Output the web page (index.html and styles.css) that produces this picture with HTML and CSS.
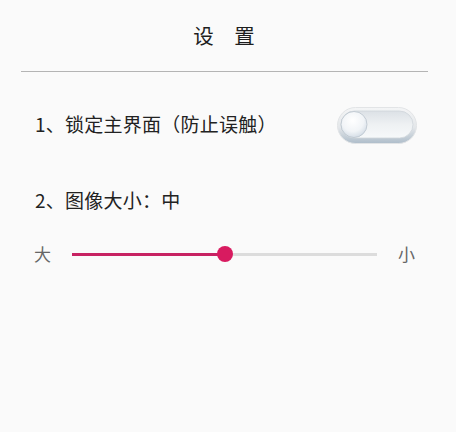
FILE: index.html
```html
<!DOCTYPE html>
<html lang="zh-CN">
<head>
<meta charset="utf-8">
<title>设置</title>
<link rel="stylesheet" href="styles.css">
</head>
<body>
<div class="page">
  <header class="title-bar">
    <h1 class="title">设　置</h1>
  </header>
  <div class="divider"></div>
  <div class="row row-lock">
    <span class="label">1、锁定主界面（防止误触）</span>
    <svg class="toggle" width="80" height="37" viewBox="0 0 80 37">
      <defs>
        <linearGradient id="outer" x1="0" y1="0" x2="0" y2="1">
          <stop offset="0" stop-color="#f4f5f6"/>
          <stop offset="0.55" stop-color="#e4e7ea"/>
          <stop offset="1" stop-color="#aebdca"/>
        </linearGradient>
        <linearGradient id="inner" x1="0" y1="0" x2="0" y2="1">
          <stop offset="0" stop-color="#dce1e6"/>
          <stop offset="0.5" stop-color="#eef1f3"/>
          <stop offset="1" stop-color="#f7f9fa"/>
        </linearGradient>
        <radialGradient id="knob" cx="0.45" cy="0.35" r="0.7">
          <stop offset="0" stop-color="#ffffff"/>
          <stop offset="0.6" stop-color="#f1f4f7"/>
          <stop offset="1" stop-color="#cfd9e3"/>
        </radialGradient>
      </defs>
      <rect x="0.5" y="0.5" width="79" height="36" rx="18" fill="url(#outer)" stroke="#e2e4e6"/>
      <rect x="4" y="4" width="72" height="27" rx="13.5" fill="url(#inner)" stroke="#cfd5db" stroke-width="0.8"/>
      <circle cx="17" cy="17.5" r="13" fill="url(#knob)" stroke="#b9c3cc" stroke-width="0.8"/>
    </svg>
  </div>
  <div class="row row-size">
    <span class="label">2、图像大小：中</span>
  </div>
  <div class="slider-row">
    <span class="end-label">大</span>
    <div class="slider">
      <div class="track"></div>
      <div class="track-active" style="width: 153px"></div>
      <div class="thumb" style="left: 153px"></div>
    </div>
    <span class="end-label">小</span>
  </div>
</div>
</body>
</html>
```
FILE: styles.css
```css
html, body {
  margin: 0;
  padding: 0;
  background: #fafafa;
}
body {
  font-family: "Noto Sans CJK SC", "Noto Sans", sans-serif;
  color: #222;
  text-spacing-trim: space-all;
  font-kerning: none;
}
.page {
  width: 456px;
  height: 432px;
  overflow: hidden;
}
.title-bar {
  height: 71px;
  display: flex;
  align-items: center;
  justify-content: center;
  padding-right: 8px;
  box-sizing: border-box;
}
.title {
  margin: 0;
  font-size: 20.5px;
  font-weight: normal;
  line-height: 24px;
  color: #1e1e1e;
  padding-bottom: 2px;
}
.divider {
  margin-left: 21px;
  width: 407px;
  height: 1px;
  background: #b4b4b4;
}
.row {
  display: flex;
  align-items: center;
  padding-left: 35px;
}
.label {
  font-size: 19px;
  line-height: 26px;
  letter-spacing: 0.25px;
  color: #222;
}
.row-lock {
  margin-top: 35px;
  height: 37px;
  justify-content: space-between;
  padding-right: 39px;
}
.row-lock .label {
  padding-bottom: 4px;
}
.toggle {
  display: block;
}
.row-size {
  margin-top: 43px;
  height: 26px;
}
.slider-row {
  margin-top: 31px;
  height: 20px;
  display: flex;
  align-items: center;
  padding-left: 34px;
}
.end-label {
  font-size: 17px;
  line-height: 20px;
  color: #666;
}
.slider {
  position: relative;
  width: 305px;
  height: 20px;
  margin: 0 21px 0 21px;
}
.track {
  position: absolute;
  left: 0;
  right: 0;
  top: 9px;
  height: 3px;
  background: #dcdcdc;
}
.track-active {
  position: absolute;
  left: 0;
  top: 9px;
  height: 3px;
  background: #c72262;
}
.thumb {
  position: absolute;
  top: 2px;
  width: 16px;
  height: 16px;
  margin-left: -8px;
  border-radius: 50%;
  background: #d81b60;
}
```
